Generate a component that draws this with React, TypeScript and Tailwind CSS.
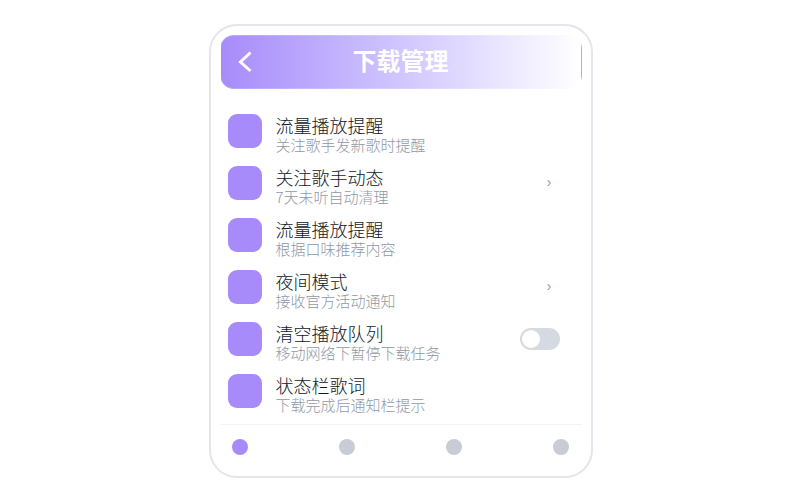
import { useState } from "react";

type SettingItem = {
  id: number;
  title: string;
  description: string;
  action?: "link" | "switch";
};

const settings: SettingItem[] = [
  { id: 1, title: "流量播放提醒", description: "关注歌手发新歌时提醒" },
  { id: 2, title: "关注歌手动态", description: "7天未听自动清理", action: "link" },
  { id: 3, title: "流量播放提醒", description: "根据口味推荐内容" },
  { id: 4, title: "夜间模式", description: "接收官方活动通知", action: "link" },
  { id: 5, title: "清空播放队列", description: "移动网络下暂停下载任务", action: "switch" },
  { id: 6, title: "状态栏歌词", description: "下载完成后通知栏提示" },
];

const tabs = ["首页", "发现", "下载", "我的"];

function Header() {
  return (
    <header className="grid h-[54px] grid-cols-[48px_1fr_48px] items-center rounded-[14px] border border-white/20 bg-linear-to-r from-[#a78bfa] to-white text-white">
      <button type="button" aria-label="返回" className="flex h-full items-center pl-4">
        <svg viewBox="0 0 18 22" className="h-[22px] w-[18px]" fill="none" stroke="currentColor" strokeWidth="3">
          <path d="M13.5 1.5 L3.5 11 L13.5 20" />
        </svg>
      </button>
      <h1 className="pb-1 text-center text-[24px] leading-7 font-bold">下载管理</h1>
    </header>
  );
}

function Setting({ item }: { item: SettingItem }) {
  const [checked, setChecked] = useState(false);
  const inputId = `setting-${item.id}`;

  return (
    <li className="flex h-[52px] items-center gap-3.5 pr-[22px] pl-2">
      <span className="size-[34px] shrink-0 rounded-[9px] bg-[#a78bfa]" />
      <div className="flex-1 pt-2">
        <p className="text-[18px] leading-5 font-light text-gray-900">
          {item.action === "switch" ? <label htmlFor={inputId}>{item.title}</label> : item.title}
        </p>
        <p className="text-[15px] leading-5 font-light text-[#8f98a6]">{item.description}</p>
      </div>
      {item.action === "link" && (
        <a
          href="#"
          aria-label={item.title}
          className="pr-2 pb-0.5 font-['Liberation_Sans',sans-serif] text-[15px] leading-5 text-gray-400"
        >
          ›
        </a>
      )}
      {item.action === "switch" && (
        <input
          id={inputId}
          type="checkbox"
          role="switch"
          checked={checked}
          onChange={(e) => setChecked(e.target.checked)}
          className="flex h-[22px] w-10 appearance-none items-center rounded-full bg-[#d5d9e1] px-0.5 before:size-[18px] before:rounded-full before:bg-white checked:justify-end checked:bg-[#a78bfa]"
        />
      )}
    </li>
  );
}

export default function App() {
  const [active, setActive] = useState(0);

  return (
    <main className="flex min-h-screen justify-center bg-white py-6 pl-px font-['Noto_Sans_CJK_SC',sans-serif]">
      <div className="w-full max-w-96 self-start rounded-[28px] border-2 border-[#e5e5eb] bg-white p-[9px]">
        <Header />
        <ul className="pt-4 pb-[7px]">
          {settings.map((item) => (
            <Setting key={item.id} item={item} />
          ))}
        </ul>
        <nav className="flex justify-between border-t border-gray-100 px-3 pt-3.5 pb-3">
          {tabs.map((tab, index) => (
            <button
              key={tab}
              type="button"
              aria-label={tab}
              onClick={() => setActive(index)}
              className={`size-4 rounded-full ${index === active ? "bg-[#a78bfa]" : "bg-[#c8ccd4]"}`}
            />
          ))}
        </nav>
      </div>
    </main>
  );
}
